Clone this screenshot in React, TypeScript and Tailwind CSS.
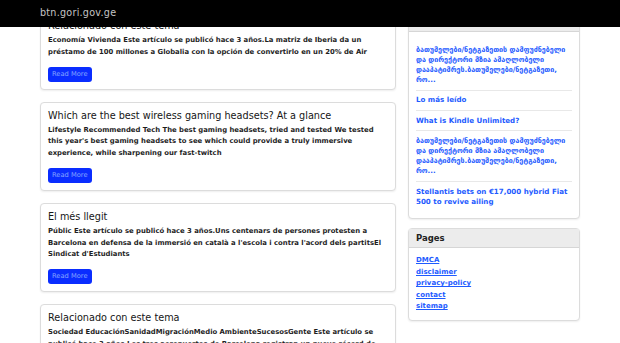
const posts = [
  {
    title: "Relacionado con este tema",
    body: "Economía Vivienda Este artículo se publicó hace 3 años.La matriz de Iberia da un préstamo de 100 millones a Globalia con la opción de convertirlo en un 20% de Air",
  },
  {
    title: "Which are the best wireless gaming headsets? At a glance",
    body: "Lifestyle Recommended Tech The best gaming headsets, tried and tested We tested this year's best gaming headsets to see which could provide a truly immersive experience, while sharpening our fast-twitch",
  },
  {
    title: "El més llegit",
    body: "Públic Este artículo se publicó hace 3 años.Uns centenars de persones protesten a Barcelona en defensa de la immersió en català a l'escola i contra l'acord dels partitsEl Sindicat d'Estudiants",
  },
  {
    title: "Relacionado con este tema",
    body: "Sociedad EducaciónSanidadMigraciónMedio AmbienteSucesosGente Este artículo se publicó hace 3 años.Los tres aeropuertos de Barcelona registran un nuevo récord de pasajeros",
  },
];

const georgian =
  "ბათუმელები/ნეტგაზეთის დამფუძნებელი და დირექტორი მზია ამაღლობელი დააპატიმრეს.ბათუმელები/ნეტგაზეთი, რო...";

const recent = [
  georgian,
  "Lo más leído",
  "What is Kindle Unlimited?",
  georgian,
  "Stellantis bets on €17,000 hybrid Fiat 500 to revive ailing",
];

const pages = ["DMCA", "disclaimer", "privacy-policy", "contact", "sitemap"];

function PostCard({ title, body }: { title: string; body: string }) {
  return (
    <div className="rounded-[4px] border border-[#dcdcdc] bg-white px-[7px] pt-[7px] pb-[7px] shadow-[0_1px_2px_rgba(0,0,0,0.07)]">
      <h5 className="mb-[3px] text-[9.7px] leading-[12px] text-[#161616]">{title}</h5>
      <p className="text-[6.85px] font-bold leading-[11.75px] text-[#1e1e1e]">{body}</p>
      <button className="mt-[8px] block h-[15px] rounded-[3px] bg-[#0a2dff] px-[4px] text-[6.7px] leading-[15px] text-[#86a6ff]">
        Read More
      </button>
    </div>
  );
}

export default function App() {
  return (
    <div className="relative h-[343px] w-[620px] overflow-hidden bg-white font-['DejaVu_Sans',sans-serif]">
      <div className="absolute inset-x-0 top-0 z-10 flex h-[27px] items-center bg-black pl-[40px]">
        <span className="text-[9.6px] tracking-[0.25px] text-[#c4c4c4]">btn.gori.gov.ge</span>
      </div>

      <div className="flex items-start gap-[12px] pl-[40px] pt-[12px]">
        <main className="flex w-[356px] flex-col gap-[12px]">
          {posts.map((p, i) => (
            <PostCard key={i} title={p.title} body={p.body} />
          ))}
        </main>

        <aside className="flex w-[172px] flex-col gap-[9px]">
          <div className="rounded-[4px] border border-[#dcdcdc] bg-white shadow-[0_1px_2px_rgba(0,0,0,0.07)]">
            <div className="h-[19px] border-b border-[#d6d6d6] bg-[#ececec] px-[7px] text-[8.5px] font-bold leading-[18px] text-[#222]">
              Recent Posts
            </div>
            <ul className="px-[7px] pt-[8px] pb-[7px]">
              {recent.map((r, i) => (
                <li
                  key={i}
                  className={`py-[4.5px] text-[7.1px] font-bold leading-[10.2px] text-[#1e5bff] ${
                    i > 0 ? "border-t border-[#e8e8e8]" : ""
                  }`}
                >
                  <a href="#">{r}</a>
                </li>
              ))}
            </ul>
          </div>

          <div className="rounded-[4px] border border-[#dcdcdc] bg-white shadow-[0_1px_2px_rgba(0,0,0,0.07)]">
            <div className="h-[19px] border-b border-[#d6d6d6] bg-[#ececec] px-[7px] text-[8.5px] font-bold leading-[18px] text-[#222]">
              Pages
            </div>
            <ul className="px-[7px] py-[7px]">
              {pages.map((p) => (
                <li key={p} className="text-[7px] font-bold leading-[11.5px]">
                  <a href="#" className="text-[#1e5bff] underline">
                    {p}
                  </a>
                </li>
              ))}
            </ul>
          </div>
        </aside>
      </div>
    </div>
  );
}
